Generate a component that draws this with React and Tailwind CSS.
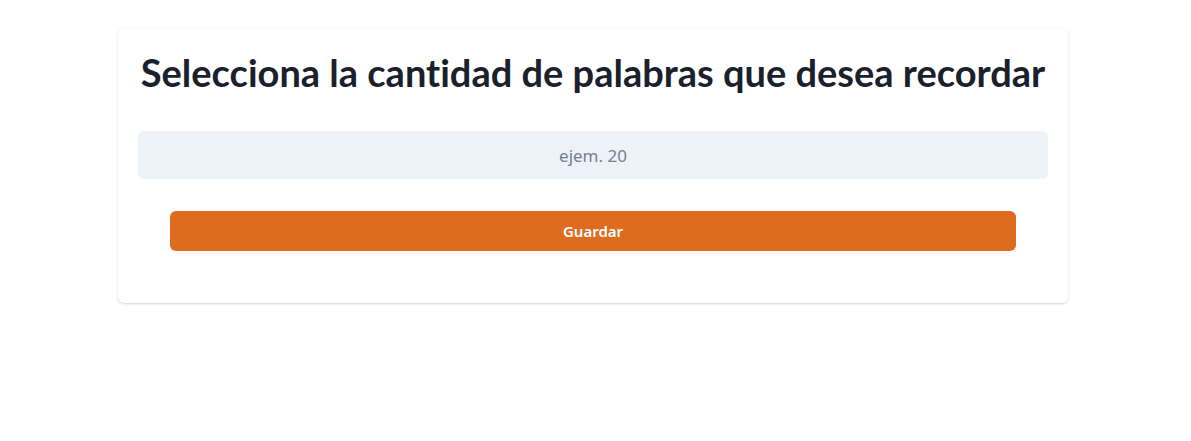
export default function App() {
  return (
    <div className="min-h-[441px] bg-white pt-[28px]" style={{ fontFamily: '"Noto Sans", "Open Sans", sans-serif' }}>
      <div className="ml-[118px] w-[950px] rounded-md bg-white px-[20px] pt-[20px] pb-[52px] shadow-[0_1px_3px_rgba(0,0,0,0.12),0_1px_2px_rgba(0,0,0,0.06)]">
        <h1 className="whitespace-nowrap text-center font-['Lato',sans-serif] text-[38px] font-bold leading-[48px] text-[#1a202c] [font-variant-ligatures:none]">
          Selecciona la cantidad de palabras que desea recordar
        </h1>
        <input
          type="text"
          placeholder="ejem. 20"
          className="mt-[35px] block h-[48px] w-full rounded-md bg-[#edf2f7] text-center text-[17px] text-[#1a202c] placeholder:text-[#718096] outline-none"
        />
        <div className="mt-[32px] px-[32px]">
          <button className="h-[40px] w-full rounded-md bg-[#dd6b20] text-[15px] font-semibold text-white">
            Guardar
          </button>
        </div>
      </div>
    </div>
  );
}
